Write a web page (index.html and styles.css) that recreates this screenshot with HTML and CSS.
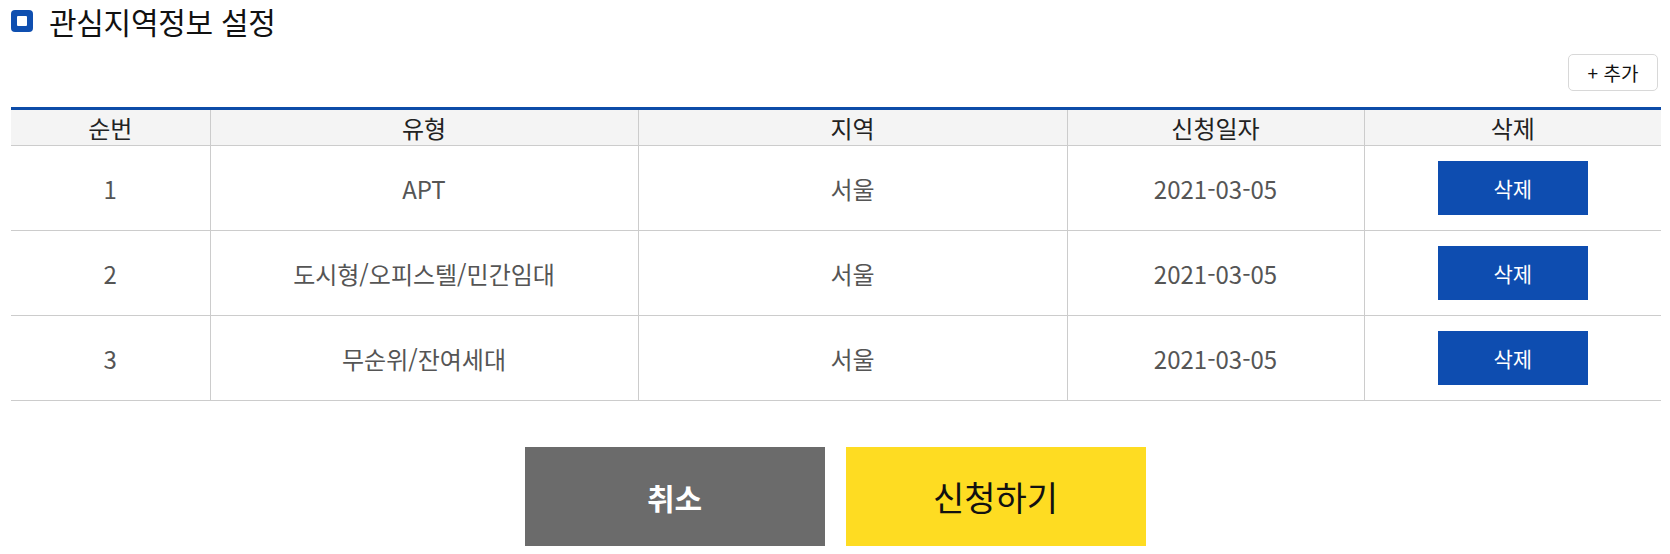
FILE: index.html
```html
<!DOCTYPE html>
<html lang="ko">
<head>
<meta charset="utf-8">
<title>관심지역정보 설정</title>
<link rel="stylesheet" href="styles.css">
</head>
<body>
<div class="page">
  <h2 class="title"><span class="title-icon"></span><span class="title-text">관심지역정보 설정</span></h2>
  <div class="toolbar">
    <button class="btn-add" type="button">+ 추가</button>
  </div>
  <table class="grid">
    <colgroup>
      <col class="c1"><col class="c2"><col class="c3"><col class="c4"><col class="c5">
    </colgroup>
    <thead>
      <tr><th>순번</th><th>유형</th><th>지역</th><th>신청일자</th><th>삭제</th></tr>
    </thead>
    <tbody>
      <tr><td>1</td><td>APT</td><td>서울</td><td>2021-03-05</td><td><button class="btn-del" type="button">삭제</button></td></tr>
      <tr><td>2</td><td>도시형/오피스텔/민간임대</td><td>서울</td><td>2021-03-05</td><td><button class="btn-del" type="button">삭제</button></td></tr>
      <tr><td>3</td><td>무순위/잔여세대</td><td>서울</td><td>2021-03-05</td><td><button class="btn-del" type="button">삭제</button></td></tr>
    </tbody>
  </table>
  <div class="actions">
    <button class="btn-big btn-cancel" type="button">취소</button>
    <button class="btn-big btn-apply" type="button">신청하기</button>
  </div>
</div>
</body>
</html>
```
FILE: styles.css
```css
* { box-sizing: border-box; }
html, body { margin: 0; padding: 0; background: #fff; }
body {
  font-family: "Noto Sans CJK KR", "Noto Sans", sans-serif;
  color: #333;
}
.page {
  width: 1670px;
  padding: 0 9px 0 11px;
}
.title {
  display: flex;
  align-items: center;
  gap: 16px;
  height: 42px;
  margin: 0;
  font-size: 30px;
  font-weight: 400;
  color: #111;
  letter-spacing: -0.3px;
}
.title-icon {
  width: 22px;
  height: 22px;
  border-radius: 4px;
  background: #0f4fb0;
  display: flex;
  align-items: center;
  justify-content: center;
  flex: none;
}
.title-icon::after {
  content: "";
  width: 10px;
  height: 10px;
  background: #fff;
  border-radius: 1px;
}
.toolbar {
  display: flex;
  justify-content: flex-end;
  margin-top: 12px;
  padding-right: 3px;
}
.btn-add {
  width: 90px;
  height: 37px;
  border: 1px solid #d8d8d8;
  border-radius: 5px;
  background: #fff;
  font-family: inherit;
  font-size: 19px;
  color: #111;
  padding: 0;
  cursor: pointer;
}
.grid {
  width: 1650px;
  margin-top: 16px;
  border-collapse: collapse;
  table-layout: fixed;
  border-top: 3px solid #0d4ca8;
}
.c1 { width: 199px; }
.c2 { width: 428px; }
.c3 { width: 429px; }
.c4 { width: 297px; }
.c5 { width: 297px; }
.grid th, .grid td {
  text-align: center;
  border-bottom: 1px solid #cccccc;
  border-left: 1px solid #cccccc;
  padding: 0;
}
.grid th:first-child, .grid td:first-child { border-left: none; }
.grid th {
  height: 37px;
  background: #f4f4f4;
  font-size: 24px;
  font-weight: 400;
  color: #222;
}
.grid td {
  height: 85px;
  font-size: 24px;
  color: #555;
}
.btn-del {
  width: 150px;
  height: 54px;
  border: none;
  background: #0e4db0;
  color: #fff;
  font-family: inherit;
  font-size: 21px;
  padding: 0;
  vertical-align: middle;
  cursor: pointer;
}
.actions {
  display: flex;
  justify-content: center;
  gap: 21px;
  margin-top: 46px;
  margin-left: -11px;
  margin-right: -9px;
}
.btn-big {
  width: 300px;
  height: 99px;
  border: none;
  font-family: inherit;
  padding: 0;
  cursor: pointer;
}
.btn-cancel { background: #6b6b6b; color: #fff; font-weight: 700; font-size: 30px; }
.btn-apply { background: #fedc22; color: #111; font-weight: 400; font-size: 34px; }
```
